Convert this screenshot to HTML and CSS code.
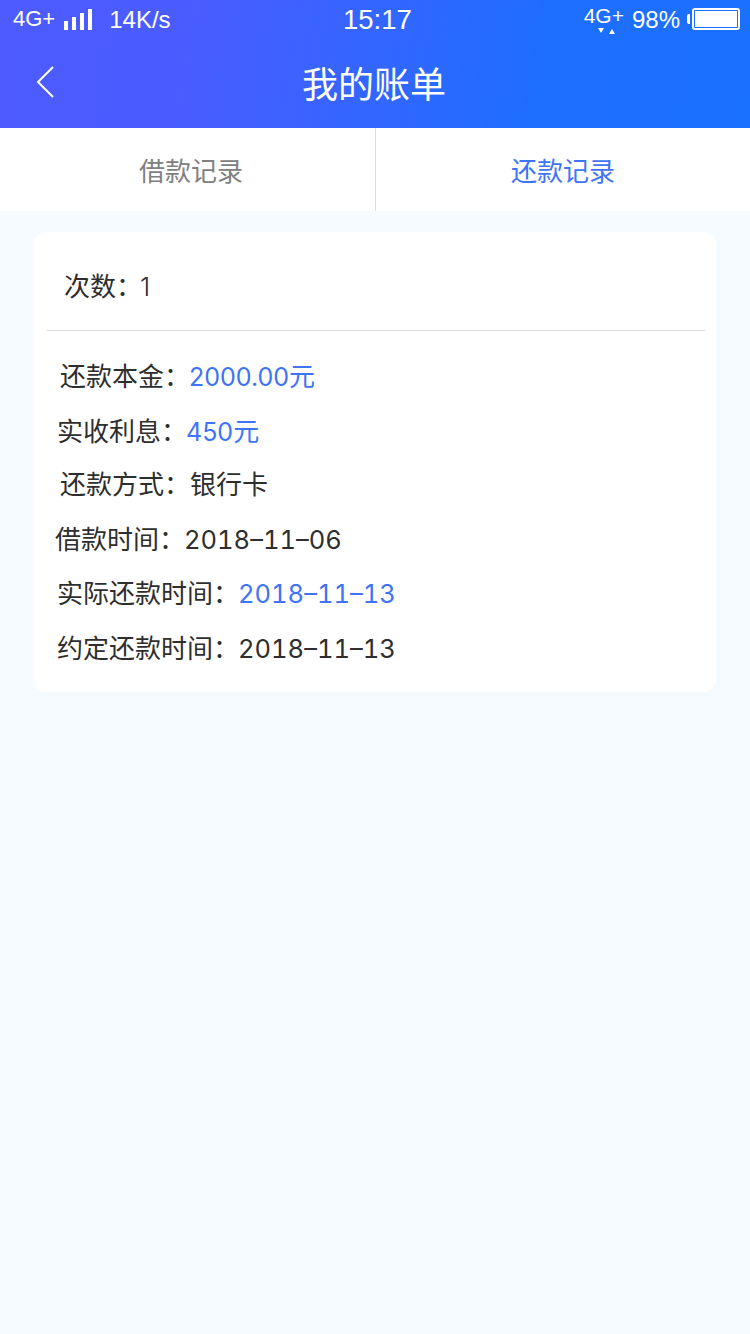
FILE: index.html
```html
<!DOCTYPE html>
<html lang="zh-CN">
<head>
    <meta charset="UTF-8">
    <meta name="viewport" content="width=device-width, initial-scale=1.0">
    <title>我的账单</title>
    <link rel="stylesheet" href="styles.css">
</head>
<body>
    <header class="top">
        <div class="status">
            <div class="status-left">
                <span class="small">4G+</span>
                <svg class="signal" width="30" height="22" viewBox="0 0 30 22">
                    <rect x="1" y="12" width="4" height="9" fill="#fff"/>
                    <rect x="9" y="8" width="4" height="13" fill="#fff"/>
                    <rect x="17" y="4" width="4" height="17" fill="#fff"/>
                    <rect x="25" y="0" width="4" height="21" fill="#fff"/>
                </svg>
                <span class="speed">14K/s</span>
            </div>
            <div class="clock">15:17</div>
            <div class="status-right">
                <span class="net">4G+<svg class="arrows" width="18" height="7" viewBox="0 0 18 7"><path d="M0 0h6L3 5zM11 6l3-5 3 5z" fill="#fff"/></svg></span>
                <span>98%</span>
                <span class="battery"><span class="battery-fill"></span></span>
            </div>
        </div>
        <div class="title-bar">
            <svg class="back" width="20" height="34" viewBox="0 0 20 34">
                <path d="M17 2 2 17l15 15" fill="none" stroke="#fff" stroke-width="2"/>
            </svg>
            <h1>我的账单</h1>
        </div>
    </header>

    <nav class="tabs">
        <div class="tab first">借款记录</div>
        <div class="tab active">还款记录</div>
    </nav>

    <main class="card">
        <div class="count">次数：<span class="one">1</span></div>
        <div class="rows">
            <div class="row r60">还款本金：<span class="amount blue">2000.00</span><span class="blue">元</span></div>
            <div class="row r57">实收利息：<span class="amount blue">450</span><span class="blue">元</span></div>
            <div class="row r60">还款方式：银行卡</div>
            <div class="row r56">借款时间：<span class="date">2018–11–06</span></div>
            <div class="row r57">实际还款时间：<span class="date blue">2018–11–13</span></div>
            <div class="row r57">约定还款时间：<span class="date">2018–11–13</span></div>
        </div>
    </main>
</body>
</html>
```

FILE: styles.css
```css
body {
    font-family: Inter, "Noto Sans CJK SC", sans-serif;
    background-color: #f6fbff;
    margin: 0;
    padding: 0;
    height: 1334px;
    overflow: hidden;
    color: #2e2e2e;
}

.top {
    height: 128px;
    background: linear-gradient(100deg, #4d5bff 0%, #4a5cff 25%, #1e6eff 72%, #1a70ff 100%);
    color: #fff;
}

.status {
    height: 40px;
    display: flex;
    align-items: center;
    justify-content: space-between;
    font-family: "Liberation Sans", sans-serif;
    font-size: 24px;
    position: relative;
}

.small {
    font-size: 22px;
    margin-top: -2px;
}

.status-left {
    display: flex;
    align-items: center;
    padding-left: 13px;
}

.signal {
    margin-left: 8px;
}

.speed {
    margin-left: 16px;
}

.clock {
    position: absolute;
    left: 343px;
    top: 4px;
    font-size: 27.5px;
}

.status-right {
    display: flex;
    align-items: center;
    padding-right: 10px;
}

.net {
    position: relative;
    font-size: 21px;
    margin-right: 8px;
    margin-top: -8px;
}

.arrows {
    position: absolute;
    left: 14px;
    top: 24px;
}

.battery {
    display: block;
    width: 42px;
    height: 16px;
    margin-left: 12px;
    margin-top: -2px;
    border: 2px solid #fff;
    border-radius: 3px;
    padding: 1px;
    position: relative;
}

.battery::before {
    content: "";
    position: absolute;
    left: -7px;
    top: 4px;
    width: 3px;
    height: 10px;
    background-color: #fff;
    border-radius: 2px 0 0 2px;
}

.battery-fill {
    display: block;
    height: 100%;
    background-color: #fff;
}

.title-bar {
    height: 88px;
    display: flex;
    align-items: center;
    justify-content: center;
    position: relative;
    padding-right: 2px;
}

.title-bar h1 {
    margin: -4px 0 0;
    font-size: 36px;
    font-weight: 400;
}

.back {
    position: absolute;
    left: 36px;
    top: 25px;
}

.tabs {
    display: flex;
    height: 83px;
    background-color: #fff;
}

.tab {
    flex: 0 0 50%;
    box-sizing: border-box;
    display: flex;
    align-items: center;
    justify-content: center;
    font-size: 26px;
    color: #808080;
}

.tab.first {
    padding-left: 7px;
}

.tab.active {
    color: #3e74f5;
    border-left: 1px solid #dcdcdc;
}

.card {
    margin: 21px 34px 0;
    height: 460px;
    background-color: #fff;
    border-radius: 12px;
    padding: 0 11px 0 13px;
}

.count {
    height: 98px;
    line-height: 110px;
    padding-left: 17px;
    font-size: 26px;
    border-bottom: 1px solid #dcdcdc;
}

.one {
    font-weight: 300;
    margin-left: -2px;
}

.rows {
    padding-top: 19px;
}

.row {
    height: 54px;
    line-height: 54px;
    font-size: 26px;
}

.row:nth-child(odd) {
    height: 55px;
}

.row:nth-child(2) {
    height: 53px;
}

.row:nth-child(3) {
    height: 55px;
}

.amount {
    font-size: 25px;
    margin-left: -1px;
}

.date {
    font-size: 25.5px;
    font-variant-numeric: tabular-nums;
    margin-left: -1px;
}

.r60 {
    padding-left: 13px;
}

.r57 {
    padding-left: 10px;
}

.r56 {
    padding-left: 8px;
}

.blue {
    color: #3e74f5;
}
```
